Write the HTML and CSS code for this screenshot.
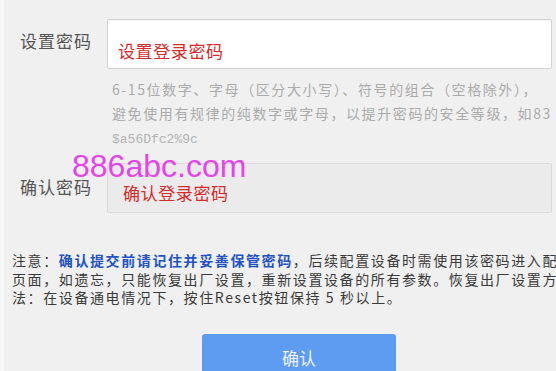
FILE: index.html
```html
<!DOCTYPE html>
<html lang="zh-CN">
<head>
<meta charset="utf-8">
<title>设置密码</title>
<link rel="stylesheet" href="styles.css">
</head>
<body>
<div class="page">
  <div class="row row-pwd">
    <label class="label" for="pwd">设置密码</label>
    <div class="field">
      <input id="pwd" class="input input-pwd" type="password" placeholder="设置登录密码">
      <div class="hint">
        <div class="hint-line">6-15位数字、字母（区分大小写）、符号的组合（空格除外），</div>
        <div class="hint-line">避免使用有规律的纯数字或字母，以提升密码的安全等级，如83</div>
        <div class="hint-example">$a56Dfc2%9c</div>
      </div>
    </div>
  </div>
  <div class="row row-confirm">
    <label class="label" for="pwd2">确认密码</label>
    <div class="field">
      <input id="pwd2" class="input input-confirm" type="password" placeholder="确认登录密码" disabled>
    </div>
  </div>
  <p class="notice">
    <span class="notice-line">注意：<span class="strong">确认提交前请记住并妥善保管密码</span>，后续配置设备时需使用该密码进入配置</span>
    <span class="notice-line">页面，如遗忘，只能恢复出厂设置，重新设置设备的所有参数。恢复出厂设置方</span>
    <span class="notice-line">法：在设备通电情况下，按住Reset按钮保持 5 秒以上。</span>
  </p>
  <div class="actions">
    <button class="btn" type="button">确认</button>
  </div>
  <div class="watermark">886abc.com</div>
</div>
</body>
</html>
```

FILE: styles.css
```css
html, body {
  margin: 0;
  padding: 0;
  background: #f0f0f0;
  overflow: hidden;
}

.page {
  position: relative;
  width: 556px;
  height: 371px;
  box-sizing: border-box;
  border-left: 4px solid #f7f7f7;
  padding-top: 19px;
  font-family: "Noto Sans CJK SC", "DejaVu Sans", sans-serif;
  overflow: hidden;
}

.row {
  display: flex;
  align-items: flex-start;
  padding-left: 16px;
}

.row-confirm {
  margin-top: 11px;
}

.label {
  width: 87px;
  flex: none;
  font-size: 17px;
  line-height: 24px;
  color: #555;
  padding-top: 10px;
  letter-spacing: 1px;
}

.row-confirm .label {
  padding-top: 12px;
}

.field {
  display: flex;
  flex-direction: column;
}

.input {
  width: 445px;
  height: 50px;
  box-sizing: border-box;
  margin: 0;
  border: 1px solid #d2d2d2;
  border-radius: 2px;
  font-family: "Noto Sans CJK SC", sans-serif;
  font-size: 17px;
  outline: none;
}

.input::placeholder {
  color: #d42a2a;
  opacity: 1;
  letter-spacing: 0.6px;
}

.input-pwd {
  background: #fff;
  padding: 12px 10px 0;
  box-shadow: inset 0 1px 1px rgba(0, 0, 0, 0.04);
}

.input-confirm {
  background: #ebebeb;
  border-color: #dadada;
  padding: 8px 15px 0;
}

.hint {
  padding-top: 8px;
  padding-left: 5px;
  color: #ababab;
  font-size: 14px;
}

.hint-line {
  line-height: 24px;
  white-space: nowrap;
  letter-spacing: 1.6px;
}

.hint-example {
  margin-top: 3px;
  line-height: 24px;
  font-family: "Liberation Mono", monospace;
  font-size: 13px;
  color: #b4b4b4;
}

.notice {
  margin: 38px 0 0;
  padding-left: 8px;
  font-size: 14px;
  line-height: 18.5px;
  color: #3a3a3a;
  letter-spacing: 1.6px;
}

.notice-line {
  display: block;
  white-space: nowrap;
}

.strong {
  color: #2352c4;
  font-weight: bold;
}

.actions {
  margin-top: 27px;
  padding-left: 198px;
}

.btn {
  display: block;
  width: 194px;
  height: 48px;
  border: none;
  border-radius: 3px;
  background: #5e9cf2;
  color: #eef4ff;
  font-family: "Noto Sans CJK SC", sans-serif;
  font-size: 17px;
  line-height: 48px;
  padding: 0;
}

.watermark {
  position: absolute;
  left: 68px;
  top: 150px;
  font-family: "Liberation Sans", Arial, sans-serif;
  font-size: 32px;
  line-height: 32px;
  color: #e544e8;
}
```
